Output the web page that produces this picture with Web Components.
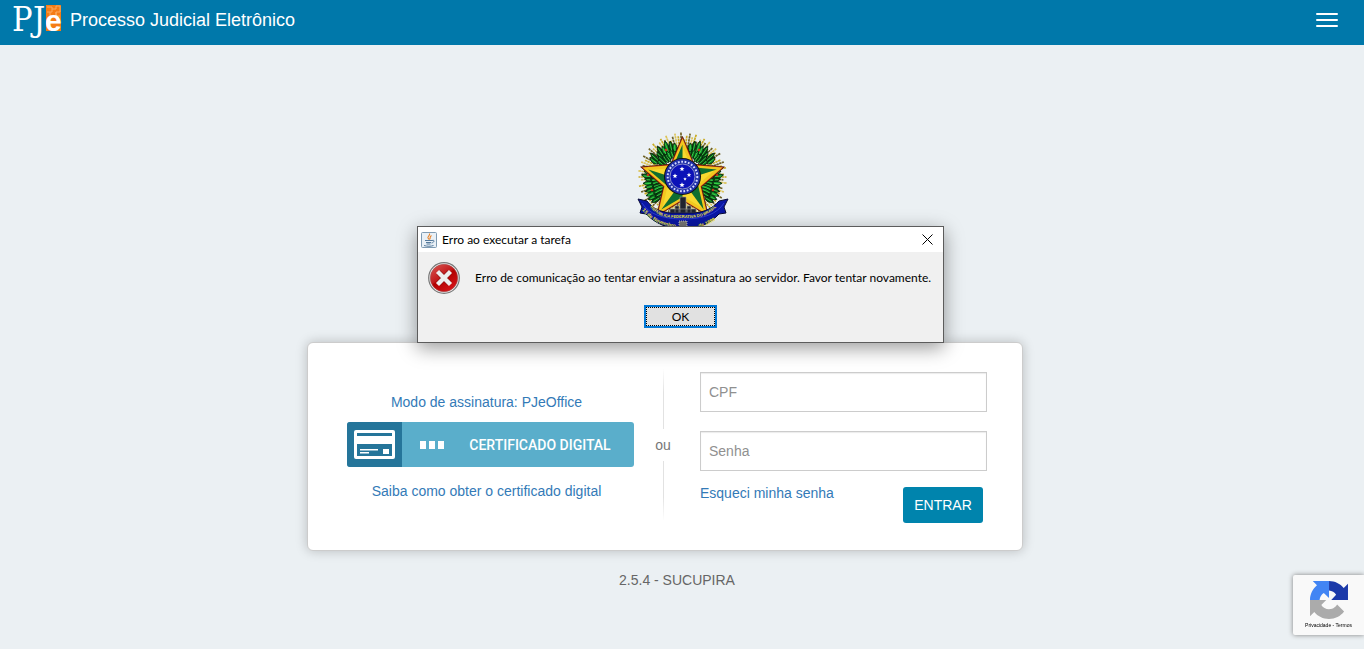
<!DOCTYPE html>
<html lang="pt-BR">
<head>
<meta charset="utf-8">
<meta name="viewport" content="width=device-width, initial-scale=1">
<title>Processo Judicial Eletrônico</title>
<style>
html,body{margin:0;height:100%}
body{background:#ebf0f3;font-family:"Liberation Sans",Arial,sans-serif;font-size:14px;line-height:20px;color:#666}
</style>
</head>
<body>
<pje-page></pje-page>
<script>
function define(name, html, setup){
  customElements.define(name, class extends HTMLElement{
    constructor(){
      super();
      const t=document.createElement('template');
      t.innerHTML=html;
      this.attachShadow({mode:'open'}).append(t.content.cloneNode(true));
      if(setup) setup(this.shadowRoot,this);
    }
  });
}

define('pje-logo',`
<style>:host{display:block;width:50px;height:45px}svg{display:block;overflow:visible}text{font-family:"DejaVu Serif Condensed","DejaVu Serif",serif;font-stretch:condensed;fill:#fff}.e{font-family:"Liberation Sans",sans-serif;font-weight:bold}</style>
<svg width="50" height="45" viewBox="0 0 50 45" role="img" aria-label="PJe">
<rect x="34" y="5" width="15" height="26" fill="#f57c14"/>
<path d="M35 7h5v5h-5M40 9h4v-3h4v6h-4v4h-6v-4M44 12v4h4" fill="none" stroke="#fba95e" stroke-width="1"/>
<text x="0" y="31" font-size="34">P</text>
<text x="21" y="31" font-size="34">J</text>
<text class="e" x="33" y="31" font-size="30">e</text>
</svg>`);

define('pje-header',`
<style>
:host{display:flex;align-items:flex-start;justify-content:space-between;height:45px;background:#0078aa;color:#fff;padding:0 26px 0 12px}
.brand{display:flex;gap:8px;color:#fff;text-decoration:none;font-size:18px;line-height:40px}
button{display:flex;flex-direction:column;gap:4px;border:0;background:none;padding:13px 0;width:22px}
i{display:block;width:22px;height:2px;background:#fff;border-radius:1px}
</style>
<a class="brand" href="#"><pje-logo></pje-logo><slot></slot></a>
<button type="button" aria-label="Menu"><i></i><i></i><i></i></button>`);

define('national-crest',`
<style>:host{display:block;width:96px;height:100px}svg{display:block;overflow:visible}text{font-family:"Liberation Sans",sans-serif;font-weight:bold;fill:#f4ec3c}</style>
<svg width="96" height="100" viewBox="-2 0 96 100" role="img" aria-label="Brasão da República">
<g id="rays"></g><g id="leaves"></g><g id="star"></g>
<circle cx="46.500" cy="46.500" r="18.500" fill="#111"/><circle cx="46.500" cy="46.500" r="17.500" fill="#1f2fa8"/>
<circle cx="46.500" cy="46.500" r="14.800" fill="none" stroke="#d4d8ff" stroke-width="2" stroke-dasharray="1.800 1.600"/>
<circle cx="46.500" cy="46.500" r="12.500" fill="#0c12b8" stroke="#a9accf" stroke-width=".8"/>
<g id="cross"></g>
<path d="M44 67h6v17h-6zM34 79h26v4H34zM39 76h4v9h-4zM51 76h4v9h-4z" fill="#20232e" stroke="#9a9a98" stroke-width=".6"/>
<path d="M2 69l9 2c6 8 14 11 24 12h23c11-1 19-5 25-12l9-2-4 8 2 6-7 1c-8 9-20 15-36 15S19 93 10 84l-6-1 2-6z" fill="#0a17a4" stroke="#080a35" stroke-width="1"/>
<path d="M6 73c7 11 20 16 41 16s34-5 41-16" fill="none" stroke="#3a4ce0" stroke-width=".7"/>
<path id="r1" d="M14 77C25 89 34 88 47 88S71 88 83 74" fill="none"/><path id="r2" d="M6 80C16 92 28 97 47 98S78 94 91 80" fill="none"/>
<text font-size="4"><textPath href="#r1">REPÚBLICA FEDERATIVA DO BRASIL</textPath></text>
<text font-size="5"><textPath href="#r2">15 de Novembro</textPath></text>
<text font-size="5"><textPath href="#r2" startOffset="62">de 1889</textPath></text>
<path d="M43 91h8v7h-8z" fill="#777" stroke="#ddd" stroke-width=".8" stroke-dasharray="1 1"/>
</svg>`,root=>{
  const pt=(cx,cy,r,a)=>[cx+r*Math.cos(a),cy+r*Math.sin(a)].map(n=>n.toFixed(2)).join(' ');
  const star=(cx,cy,R,r)=>{let d='';for(let k=0;k<10;k++)d+=(k?'L':'M')+pt(cx,cy,k%2?r:R,-Math.PI/2+k*Math.PI/5);return d+'z'};
  const rad=Math.PI/180;
  // golden sunburst
  let s='';
  for(let k=0;k<90;k++){
    const a=k*4*rad,R=[44,41,45,38,42][k%5];
    s+='<path d="M'+pt(46.5,47,24,a)+'L'+pt(46.5,47,R,a)+'" stroke="'+['#c9ab25','#6f6226','#dcc458'][k%3]+'" stroke-width="1.700" stroke-dasharray="2.500 .5"/>';
  }
  root.getElementById('rays').innerHTML=s;
  // branches of coffee and tobacco, fanned out between the points of the star
  const fan=[[-138,23,36],[-132,22,40],[-126,24,37],[-119,22,40],[-112,23,38],[-106,23,35],
    [-152,24,38],[-146,23,40],[-174,26,39],[-180,25,41],[-186,24,38],[-192,23,40],[-198,23,39],[-204,22,40],[-210,22,41],[-216,24,41],[-222,26,40]];
  s='';
  for(const side of [0,1]){
    s+='<g'+(side?' transform="translate(93 0) scale(-1 1)"':'')+'>';
    fan.forEach(([deg,a,b],k)=>{
      for(const [r0,r1,da] of [[a-3,(a+b)/2+1,4],[(a+b)/2-3,b,0]]){
        const m=(r0+r1)/2,t=(deg+da)*rad,w=(4.6/m);
        s+='<path d="M'+pt(46.5,47,r0,t)+'Q'+pt(46.5,47,m,t-w*.9)+' '+pt(46.5,47,r1,t+.05)+'Q'+pt(46.5,47,m,t+w)+' '+pt(46.5,47,r0,t)+'z" fill="'+['#0d7a20','#084d14','#12972c'][k%3]+'" stroke="#04240a" stroke-width=".9"/>'
          +'<path d="M'+pt(46.5,47,r0+1,t)+'L'+pt(46.5,47,r1-2,t+.03)+'" stroke="#3fd24a" stroke-width=".9"/>';
      }
    });
    s+='<g fill="#c4331c"><circle cx="30" cy="20" r="1.300"/><circle cx="12" cy="45" r="1.300"/><circle cx="16" cy="60" r="1.300"/></g></g>';
  }
  root.getElementById('leaves').innerHTML=s;
  // faceted five-pointed star
  s='<path d="'+star(46.5,50.5,44,20)+'" fill="#c62a14" stroke="#4d1608" stroke-width=".8"/><path d="'+star(46.5,50.5,42,19)+'" fill="#f2c81f"/>';
  for(let k=0;k<5;k++){
    const a=-Math.PI/2+k*Math.PI*2/5;
    s+='<path d="M'+pt(46.5,50.5,34,a)+'L'+pt(46.5,50.5,15.5,a+Math.PI/5)+'L46.5 50.500z" fill="#f8d930"/><path d="M'+pt(46.5,50.5,36,a)+'L'+pt(46.5,50.5,16.5,a-Math.PI/5)+'L46.5 50.500z" fill="#0e6e30"/>';
  }
  root.getElementById('star').innerHTML=s;
  root.getElementById('cross').innerHTML=[[46,39,2.6],[39,46,2.6],[53,45,2.4],[49,49,1.8],[46,55,2.8]].map(([x,y,r])=>'<path d="'+star(x,y,r,r*.45)+'" fill="#fff"/>').join('');
});

define('login-card',`
<style>
:host{display:block;width:100%;max-width:716px;box-sizing:border-box}
form{box-sizing:border-box;display:grid;grid-template-columns:1fr 66px 1fr;padding:29px 35px 27px 39px;background:#fff;border:1px solid #ccc;border-radius:6px;box-shadow:0 0 12px rgba(0,0,0,.22)}
a{color:#337ab7;text-decoration:none}
.cert{display:flex;flex-direction:column;padding-top:20px}
.cert a{text-align:center;padding-right:8px}
.cert button{display:flex;align-items:center;width:100%;height:45px;margin:10px 0 14px;border:0;border-radius:3px;padding:0;background:#5aaecb;color:#fff;overflow:hidden;font:500 14px/20px Roboto,sans-serif}
.card{flex:none;width:55px;height:45px;background:#25759a;display:block}
.dots{flex:none;margin-left:18px;display:block}
.label{flex:1;text-align:center}
.or{display:flex;flex-direction:column;align-items:center;margin:-4px 8px 2px 0;line-height:20px;gap:6px;color:#777}
.or i{width:1px;flex:1;background:linear-gradient(#fff,#e2e2e2 40%)}
.or i:last-child{background:linear-gradient(#e2e2e2 60%,#fff)}
.fields{display:flex;flex-direction:column}
input{box-sizing:border-box;width:100%;height:40px;border:1px solid #ccc;border-radius:0;padding:6px 8px;font:14px/20px "Liberation Sans",Arial,sans-serif;margin:0 0 19px;background:#fff;box-shadow:inset 0 1px 1px rgba(0,0,0,.08);color:#555}
input::placeholder{color:#909090;opacity:1}
#senha{margin-bottom:12px}
.row{display:flex;justify-content:space-between;padding-right:4px}
.row button{width:80px;height:36px;margin-top:4px;background:#0084ad;color:#fff;border:0;border-radius:3px;padding:0;font:14px/20px "Liberation Sans",Arial,sans-serif}
</style>
<form>
<div class="cert">
<a href="#">Modo de assinatura: PJeOffice</a>
<button type="button">
<svg class="card" viewBox="0 0 55 45" aria-hidden="true"><rect x="7" y="8" width="41" height="29" rx="2" fill="#fff"/><path d="M10 11h35v3H10zM10 22h35v12H10z" fill="#25759a"/><path d="M13 27h18v1.500H13zM13 30h9v1.500h-9zM36 27h6v5h-6z" fill="#fff"/></svg>
<svg class="dots" width="26" height="8" viewBox="0 0 26 8" aria-hidden="true"><path d="M0 0h6v8H0zM9 0h6v8H9zM18 0h6v8h-6z" fill="#fff"/></svg>
<span class="label">CERTIFICADO DIGITAL</span>
</button>
<a href="#">Saiba como obter o certificado digital</a>
</div>
<div class="or"><i></i><span>ou</span><i></i></div>
<div class="fields">
<input id="cpf" type="text" placeholder="CPF" aria-label="CPF">
<input id="senha" type="password" placeholder="Senha" aria-label="Senha">
<div class="row"><a href="#">Esqueci minha senha</a><button type="button">ENTRAR</button></div>
</div>
</form>`);

define('error-dialog',`
<style>
:host{display:block;box-sizing:border-box;width:527px;max-width:100%;border:1px solid #5c5c5c;background:#f0f0f0;color:#000;box-shadow:0 5px 18px rgba(0,0,0,.4);font:12px/16px Lato,sans-serif}
header{display:flex;align-items:center;gap:5px;height:25px;background:#fff;padding:0 10px 0 3px}
header span{flex:1}
header button{border:0;background:none;padding:0;width:11px;height:11px}
svg{display:block;flex:none}
.msg{display:flex;align-items:center;gap:15px;padding:10px 10px 0;white-space:nowrap}
footer{display:flex;justify-content:center;padding:11px 0 14px}
.ok{box-sizing:border-box;width:73px;height:23px;border:2px solid #0078d7;background:#e1e1e1;padding:0;font:inherit;outline:1px dotted #000;outline-offset:-3px;color:#000}
</style>
<header>
<svg width="16" height="16" viewBox="0 0 16 16" aria-hidden="true"><rect x=".5" y=".5" width="15" height="15" rx="1" fill="#e9f0f6" stroke="#7f9bb3"/><path d="M8.500 1.500c1 2-2.500 3-1.500 4.500l1 1.500M10.500 3.500C8 5 10 6 8.500 7.500" fill="none" stroke="#e8832a" stroke-width="1.100"/><path d="M4 8.500h7M5 10.500h5M5.500 12h4M3 13.500c3 1 7 1 9.500 0M11 8.500c3-1 2.500 2-.5 2.500" fill="none" stroke="#557a9c" stroke-width="1"/></svg>
<span>Erro ao executar a tarefa</span>
<button type="button" aria-label="Fechar"><svg width="11" height="11" viewBox="0 0 11 11"><path d="M.5.5l10 10M10.500.5l-10 10" stroke="#000" stroke-width="1"/></svg></button>
</header>
<div class="msg">
<svg width="32" height="32" viewBox="0 0 32 32" aria-hidden="true"><defs><linearGradient id="g" x1="0" y1="0" x2=".7" y2="1"><stop offset="0" stop-color="#dc5a55"/><stop offset=".5" stop-color="#c11a1c"/><stop offset=".55" stop-color="#b10000"/><stop offset="1" stop-color="#d51318"/></linearGradient></defs><circle cx="16" cy="16" r="15.300" fill="#eee" stroke="#777" stroke-width="1.200"/><circle cx="16" cy="16" r="13.700" fill="url(#g)" stroke="#a34848" stroke-width=".6"/><path d="M10.500 10.500l11 11M21.500 10.500l-11 11" stroke="#8b1515" stroke-width="5.500"/><path d="M9.500 9.500l13 13M22.500 9.500l-13 13" stroke="#eee" stroke-width="4.300"/></svg>
<span>Erro de comunicação ao tentar enviar a assinatura ao servidor. Favor tentar novamente.</span>
</div>
<footer><button class="ok" type="button">OK</button></footer>`);

define('recaptcha-badge',`
<style>
:host{display:flex;flex-direction:column;align-items:center;box-sizing:border-box;width:71px;height:60px;padding-top:6px;background:#f9f9f9;border-radius:2px 0 0 2px;box-shadow:0 0 5px gray;font:5px/8px "Liberation Sans",Arial,sans-serif;color:#000}
svg{display:block}a{color:inherit;text-decoration:none}
nav{margin-top:2px}
</style>
<svg width="38" height="38" viewBox="0 0 64 64" aria-hidden="true">
<path fill="#1c3aa9" d="M64 31.955a33 33 0 00-.033-1.372V4.687l-7.160 7.160C50.948 4.674 42.033.093 32.050.093V16.100C37 16.500 41.500 19.200 44 23.200l-8.200 8.700z"/>
<path fill="#4285f4" d="M32.050.093H4.594l7.160 7.160C4.580 13.147 0 22.060 0 32.045h16.100c.393-4.968 3.134-9.274 7.113-11.810l8.837 8.307z"/>
<path fill="#ababab" d="M.001 32.045v27.267l7.193-7.160c5.860 7.173 14.774 11.754 24.758 11.754 10.390 0 19.622-4.960 25.450-12.642L45.667 39.405a15.550 15.550 0 01-4.754 5.336c-2.050 1.600-4.952 2.906-8.960 2.906-5.453-.156-10.407-3.297-12.943-7.276l8.307-8.307z"/>
</svg>
<nav><a href="#">Privacidade</a> - <a href="#">Termos</a></nav>`);

define('pje-page',`
<style>
:host{display:block;position:relative;min-height:100%}
main{display:flex;flex-direction:column;align-items:center;padding-top:85px}
.card{width:100%;display:flex;justify-content:center;box-sizing:border-box;padding-right:34px;margin-top:112px}
.version{margin:19px 0 0;padding-right:10px}
error-dialog{position:absolute;top:226px;left:0;right:3px;margin:0 auto}
recaptcha-badge{position:fixed;right:0;bottom:14px}
</style>
<pje-header>Processo Judicial Eletrônico</pje-header>
<main>
<national-crest></national-crest>
<div class="card"><login-card></login-card></div>
<p class="version">2.5.4 - SUCUPIRA</p>
</main>
<error-dialog role="alertdialog" aria-label="Erro ao executar a tarefa"></error-dialog>
<recaptcha-badge></recaptcha-badge>`);
</script>
</body>
</html>
